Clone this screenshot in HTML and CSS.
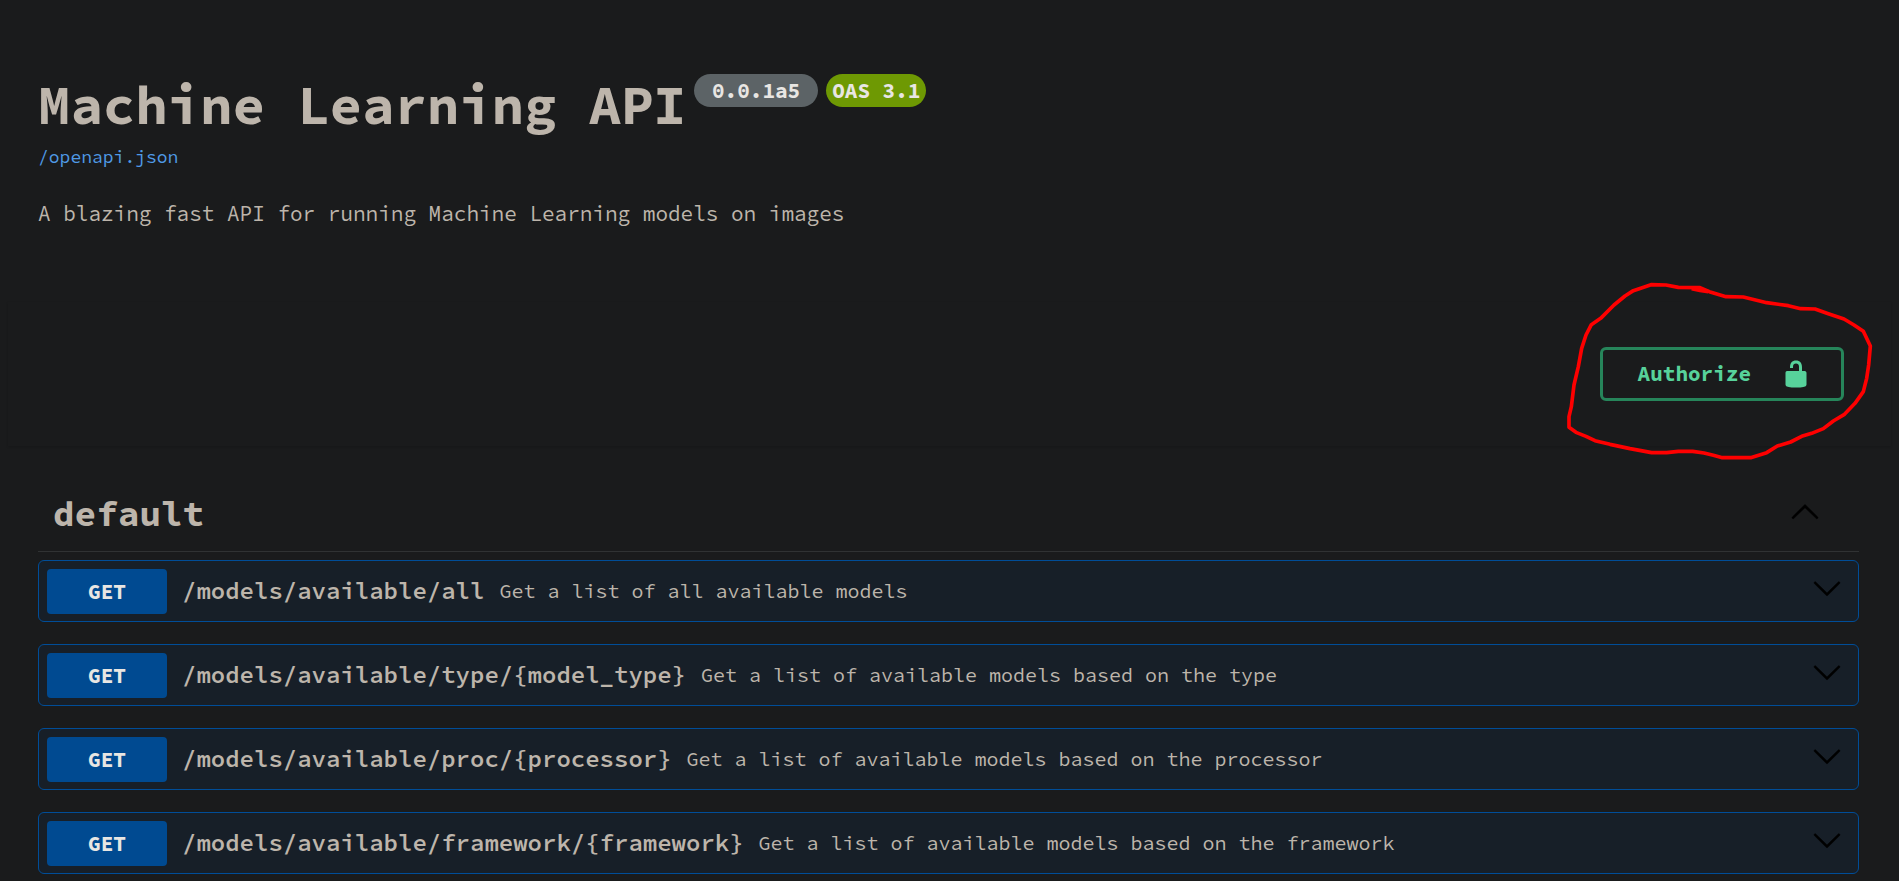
FILE: index.html
```html
<!DOCTYPE html>
<html lang="en">
<head>
<meta charset="utf-8">
<meta name="viewport" content="width=device-width, initial-scale=1">
<title>Machine Learning API</title>
<link rel="stylesheet" href="styles.css">
</head>
<body>
<svg class="sprite" aria-hidden="true">
  <symbol id="arrow-down" viewBox="0 0 20 20"><path d="M17.418 6.109c.272-.268.709-.268.979 0s.271.701 0 .969l-7.908 7.83c-.27.268-.707.268-.979 0l-7.908-7.83c-.27-.268-.27-.701 0-.969.271-.268.709-.268.979 0L10 13.25z"/></symbol>
  <symbol id="arrow-up" viewBox="0 0 20 20"><path d="M17.418 14.908c.272.268.709.268.979 0s.271-.701 0-.969l-7.908-7.83c-.27-.268-.707-.268-.979 0l-7.908 7.83c-.27.268-.27.701 0 .969.271.268.709.268.979 0L10 7.767z"/></symbol>
  <symbol id="unlocked" viewBox="0 0 20 20"><path d="M15.8 8H14V5.6C14 2.703 12.665 1 10 1 7.334 1 6 2.703 6 5.6V6h2v-.801C8 3.754 8.797 3 10 3c1.203 0 2 .754 2 2.199V8H4c-.553 0-1 .646-1 1.199V17c0 .549.428 1.139.951 1.307l1.197.387C5.672 18.861 6.55 19 7.1 19h5.8c.549 0 1.428-.139 1.951-.307l1.196-.387c.524-.167.953-.757.953-1.306V9.199C17 8.646 16.352 8 15.8 8z"/></symbol>
</svg>

<header class="info wrapper">
  <div class="title-row">
    <h1 class="title">Machine Learning API</h1>
    <span class="badge">0.0.1a5</span>
    <span class="badge badge-oas">OAS 3.1</span>
  </div>
  <a class="spec-link" href="/openapi.json">/openapi.json</a>
  <p class="description">A blazing fast API for running Machine Learning models on images</p>
</header>

<section class="scheme">
  <div class="auth">
    <button class="authorize" type="button">
      <span>Authorize</span>
      <svg class="icon" aria-hidden="true"><use href="#unlocked"/></svg>
    </button>
    <svg class="marker" viewBox="0 0 1047 600" aria-hidden="true">
      <path d="M57 472L78 487L108 499L135 512L180 523L240 536L305 548L350 548L385 544L428 544L462 549L490 556L517 563L602 563L650 548L682 528L722 516L755 499L785 490L820 476L850 453L882 434L915 400L940 365L950 325L956 285L961 228L940 184L912 165L882 147L835 131L795 117L752 116L715 107L650 98L580 81L528 80L478 65L450 53L385 52L348 45L303 44L250 62L225 78L192 105L152 145L124 164L108 195L95 235L85 290L72 345L64 410L57 440Z"/>
      <path d="M425 56L450 61L475 65"/>
    </svg>
  </div>
</section>

<main class="wrapper operations">
  <div class="tag">
    <h2 class="tag-name">default</h2>
    <button class="toggle" type="button" aria-label="Collapse default"><svg class="icon" aria-hidden="true"><use href="#arrow-up"/></svg></button>
  </div>
  <div class="list">
    <div class="op">
      <span class="method">GET</span>
      <span class="path">/models/available/all</span>
      <span class="summary">Get a list of all available models</span>
      <button class="toggle" type="button" aria-label="Expand operation"><svg class="icon" aria-hidden="true"><use href="#arrow-down"/></svg></button>
    </div>
    <div class="op">
      <span class="method">GET</span>
      <span class="path">/models/available/type/{model_type}</span>
      <span class="summary">Get a list of available models based on the type</span>
      <button class="toggle" type="button" aria-label="Expand operation"><svg class="icon" aria-hidden="true"><use href="#arrow-down"/></svg></button>
    </div>
    <div class="op">
      <span class="method">GET</span>
      <span class="path">/models/available/proc/{processor}</span>
      <span class="summary">Get a list of available models based on the processor</span>
      <button class="toggle" type="button" aria-label="Expand operation"><svg class="icon" aria-hidden="true"><use href="#arrow-down"/></svg></button>
    </div>
    <div class="op">
      <span class="method">GET</span>
      <span class="path">/models/available/framework/{framework}</span>
      <span class="summary">Get a list of available models based on the framework</span>
      <button class="toggle" type="button" aria-label="Expand operation"><svg class="icon" aria-hidden="true"><use href="#arrow-down"/></svg></button>
    </div>
  </div>
</main>
</body>
</html>
```

FILE: styles.css
```css
*, *::before, *::after { box-sizing: border-box; }

body {
  margin: 0;
  background: #1a1b1c;
  color: #bdb5ab;
  font-family: "Source Code Pro", "Noto Sans Mono CJK SC", "Liberation Mono", monospace;
  font-size: 21px;
  line-height: 28px;
}

h1, h2, p { margin: 0; }

button {
  background: transparent;
  border: 0;
  padding: 0;
  color: inherit;
  font: inherit;
  cursor: pointer;
}

.sprite { position: absolute; width: 0; height: 0; }

.icon {
  display: block;
  width: 30px;
  height: 30px;
  fill: currentColor;
}

.wrapper { padding: 0 40px 0 38px; }

.info { padding-top: 74px; }

.title-row {
  display: flex;
  align-items: flex-start;
  gap: 8px;
}

.title {
  font-size: 54px;
  font-weight: 700;
  line-height: 62px;
}

.badge {
  padding: 0 18px;
  border-radius: 17px;
  background: #5c6366;
  color: #e8e6e3;
  font-weight: 700;
  line-height: 33px;
}

.badge-oas {
  padding: 0 6px;
  background: #6e9903;
}

.spec-link {
  display: block;
  width: fit-content;
  margin-top: 9px;
  color: #4f9ae6;
  font-size: 18px;
  line-height: 24px;
  text-decoration: none;
}

.description { margin-top: 31px; }

.scheme {
  display: flex;
  justify-content: flex-end;
  margin: 74px 8px 0;
  padding: 45px 47px;
  box-shadow: 0 1px 2px rgba(0, 0, 0, 0.15);
}

.auth { position: relative; }

.authorize {
  display: flex;
  align-items: center;
  gap: 30px;
  height: 54px;
  padding: 0 30px 0 35px;
  border: 3px solid #26855a;
  border-radius: 6px;
  color: #57d29b;
  font-weight: 700;
}

/* Hand-drawn ring around the button */
.marker {
  position: absolute;
  top: -77px;
  left: -50px;
  width: 349px;
  height: 200px;
  fill: none;
  stroke: #fe0000;
  stroke-width: 11;
  stroke-linejoin: round;
  pointer-events: none;
}

.tag {
  display: flex;
  align-items: center;
  justify-content: space-between;
  margin-top: 35px;
  padding: 15px 39px 19px 15px;
  border-bottom: 1px solid #303233;
}

.tag-name {
  font-size: 36px;
  font-weight: 700;
  line-height: 36px;
}

.toggle {
  padding-bottom: 6px;
  color: #000;
}

.toggle .icon {
  stroke: currentColor;
  stroke-width: 0.4;
}

.list {
  display: flex;
  flex-direction: column;
  gap: 22px;
  padding: 8px 0;
}

.op {
  display: flex;
  align-items: center;
  gap: 15px;
  height: 62px;
  padding: 0 16px 0 8px;
  border: 1px solid #004d98;
  border-radius: 6px;
  background: #171f28;
}

.method {
  width: 120px;
  border-radius: 4px;
  background: #004a91;
  color: #e8e6e3;
  font-weight: 700;
  line-height: 45px;
  text-align: center;
}

.path {
  font-size: 24px;
  font-weight: 600;
}

.summary {
  flex: 1;
  font-size: 20px;
}
```
